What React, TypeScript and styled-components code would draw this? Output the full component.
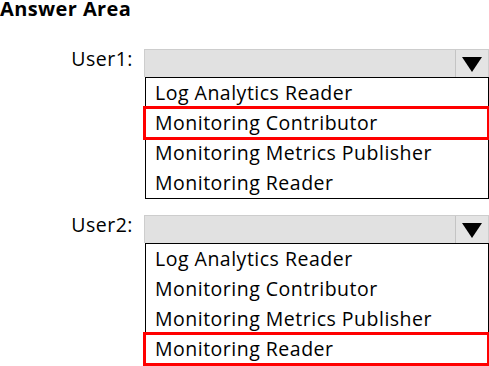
import React from "react";
import styled, { createGlobalStyle } from "styled-components";

type Question = {
  label: string;
  options: string[];
  picked: number;
};

const roles = [
  "Log Analytics Reader",
  "Monitoring Contributor",
  "Monitoring Metrics Publisher",
  "Monitoring Reader",
];

const questions: Question[] = [
  { label: "User1:", options: roles, picked: 1 },
  { label: "User2:", options: roles, picked: 3 },
];

/* ---------------- Global ---------------- */

const GlobalStyle = createGlobalStyle`
  html, body {
    margin: 0;
    padding: 0;
    background: #ffffff;
  }
  body {
    font-family: "Open Sans", "Noto Sans", sans-serif;
    color: #000;
    overflow: hidden;
  }
  * {
    box-sizing: border-box;
  }
`;

/* ---------------- Page ---------------- */

const Page = styled.div`
  width: 489px;
  height: 366px;
  overflow: hidden;
`;

const Title = styled.h1`
  margin: 0 0 31px 0;
  font-size: 20px;
  line-height: 18px;
  font-weight: 700;
  letter-spacing: 0.4px;
`;

const Questions = styled.div`
  display: flex;
  flex-direction: column;
  gap: 16px;
`;

/* ---------------- Row ---------------- */

const Row = styled.div`
  display: grid;
  grid-template-columns: 144px 1fr;
  align-items: start;
`;

const Label = styled.div`
  text-align: right;
  padding-right: 11px;
  font-size: 19.5px;
  letter-spacing: 0.5px;
  line-height: 20px;
`;

/* ---------------- Dropdown ---------------- */

const Dropdown = styled.div`
  display: flex;
  flex-direction: column;
`;

const Bar = styled.div`
  height: 28px;
  display: flex;
  background: #e1e1e1;
  border: 1px solid #cdcdcd;
  border-bottom: none;
`;

const BarField = styled.div`
  flex: 1;
`;

const Caret = styled.div`
  width: 33px;
  display: flex;
  align-items: center;
  justify-content: center;
  border-left: 1px solid #c4c4c4;
  background: #e4e4e4;
  padding-top: 2px;
`;

const List = styled.ul`
  list-style: none;
  margin: 0 0 0 1px;
  padding: 0;
  border: 1px solid #000;
  background: #fff;
`;

const Option = styled.li<{ $picked: boolean }>`
  position: relative;
  height: 30px;
  padding-left: 9px;
  font-size: 19.5px;
  letter-spacing: 0.5px;
  line-height: 30px;
  white-space: nowrap;

  &::after {
    content: "";
    display: ${(p) => (p.$picked ? "block" : "none")};
    position: absolute;
    top: -2px;
    bottom: -2px;
    left: -3px;
    right: -2px;
    border: 3px solid #ff0000;
    pointer-events: none;
  }
`;

const Arrow = () => (
  <svg width="20" height="15" viewBox="0 0 20 15">
    <polygon points="0,0 20,0 10,15" fill="#000" />
  </svg>
);

/* ---------------- Component ---------------- */

const App: React.FC = () => {
  return (
    <Page>
      <GlobalStyle />
      <Title>Answer Area</Title>
      <Questions>
        {questions.map((q) => (
          <Row key={q.label}>
            <Label>{q.label}</Label>
            <Dropdown>
              <Bar>
                <BarField />
                <Caret>
                  <Arrow />
                </Caret>
              </Bar>
              <List>
                {q.options.map((opt, i) => (
                  <Option key={opt} $picked={i === q.picked}>
                    {opt}
                  </Option>
                ))}
              </List>
            </Dropdown>
          </Row>
        ))}
      </Questions>
    </Page>
  );
};

export default App;
